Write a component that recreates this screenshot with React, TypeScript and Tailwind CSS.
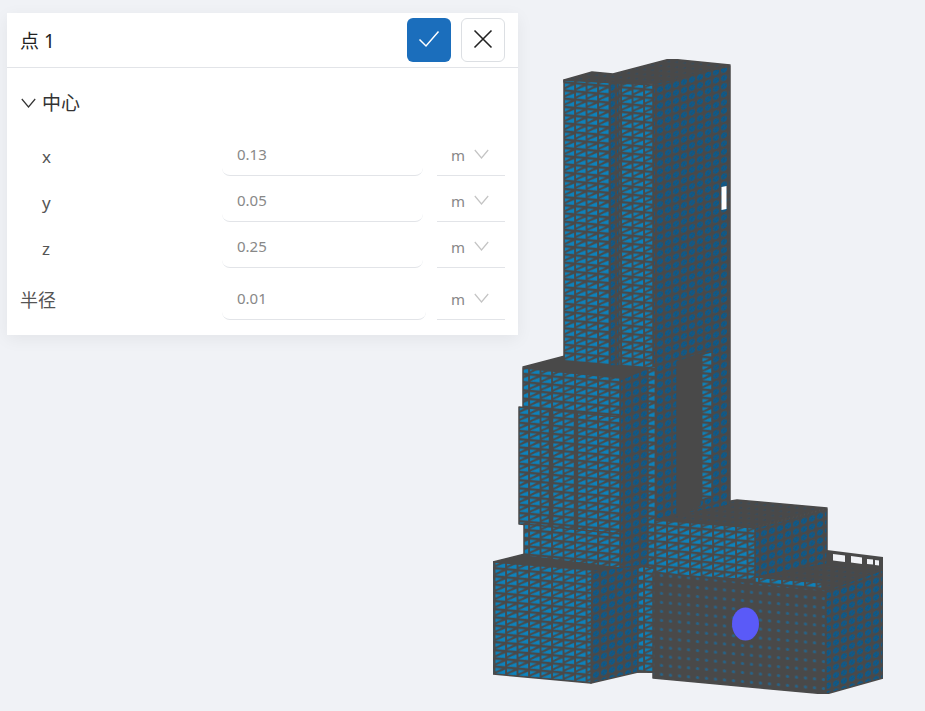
const rows = [
  { label: "x", value: "0.13" },
  { label: "y", value: "0.05" },
  { label: "z", value: "0.25" },
];

const faces = [
  // solid backing so no page colour leaks between faces
  { fill: "#4a4a4a", points: "620,360 656,360 656,672 620,672" },
  { fill: "#4a4a4a", points: "653,570 827,564 826,600 653,590" },
  // roofs
  { fill: "url(#roof)", points: "564,80 592,72 613,74 670,59 730,65 657,84 564,82" },
  { fill: "#4a4a4a", points: "523,367 565,356 650,364 620,380" },
  { fill: "#4a4a4a", points: "493,562 525,554 640,566 592,570" },
  { fill: "url(#roof)", points: "653,520 706,505 737,500 827,508 752,528" },
  { fill: "url(#roof)", points: "755,577 827,565 883,570 826,591" },
  // tower
  { fill: "url(#side)", points: "653,84 730,66 730,505 653,520" },
  { fill: "url(#front)", points: "564,80 653,85 653,368 564,362" },
  { fill: "url(#side)", points: "610,82 619,83 619,366 610,366" },
  { fill: "#4a4a4a", points: "677,362 700,354 700,505 677,515" },
  { fill: "url(#front)", points: "701,354 712,352 712,497 701,500" },
  { fill: "#ffffff", points: "721.5,187 726.5,186 726.5,209 721.5,210" },
  // mid blocks
  { fill: "url(#side)", points: "620,380 648,368 648,566 620,570" },
  { fill: "url(#front)", points: "648,368 656,366 656,672 648,672" },
  { fill: "url(#front)", points: "523,368 620,378 620,420 523,410" },
  { fill: "url(#front)", points: "519,407 620,417 620,534 519,524" },
  { fill: "#4a4a4a", points: "549.5,410 552.5,410 552.5,527 549.5,527" },
  { fill: "#4a4a4a", points: "574.5,412 577.5,412 577.5,530 574.5,530" },
  { fill: "url(#front)", points: "524,524 620,534 620,568 524,556" },
  // lower left block
  { fill: "url(#side)", points: "592,570 638,566 638,672 591,683" },
  { fill: "url(#front)", points: "638,566 654,568 654,672 638,672" },
  { fill: "url(#front)", points: "493,562 592,570 591,683 493,674" },
  // upper right block
  { fill: "url(#side)", points: "755,528 827,509 827,564 755,577" },
  { fill: "url(#front)", points: "655,520 755,528 755,580 655,574" },
  { fill: "url(#front)", points: "755,577 822,583 822,592 755,586" },
  // lower right block
  { fill: "url(#wall)", points: "653,572 755,583 826,590 826,694 653,678" },
  { fill: "url(#side)", points: "826,590 883,570 883,678 826,694" },
];

function Building() {
  return (
    <svg className="absolute inset-0" width="925" height="711" viewBox="0 0 925 711">
      <defs>
        <filter id="soft" x="0" y="0" width="100%" height="100%">
          <feGaussianBlur stdDeviation="0.4" />
        </filter>
        <pattern id="front" width="11.5" height="8.2" patternUnits="userSpaceOnUse" patternTransform="skewY(5)">
          <rect width="11.5" height="8.2" fill="#4a4a4a" />
          <path d="M1 7 L10.6 7 L10.6 2.2Z" fill="#0b82bc" />
          <path d="M1 1.3 L7.4 1.3 L1 5Z" fill="#0b82bc" />
        </pattern>
        <pattern id="side" width="8" height="8.2" patternUnits="userSpaceOnUse" patternTransform="skewY(-17)">
          <rect width="8" height="8.2" fill="#4a4a4a" />
          <circle cx="4" cy="4.1" r="3" fill="#0a5a8c" />
          <path d="M1.5 6.6 L6.5 1.6" stroke="#4a4a4a" strokeWidth="0.6" />
        </pattern>
        <pattern id="wall" width="9" height="9" patternUnits="userSpaceOnUse" patternTransform="skewY(5)">
          <rect width="9" height="9" fill="#4a4a4a" />
          <circle cx="4.5" cy="4.5" r="1.6" fill="#25648a" />
        </pattern>
        <pattern id="roof" width="8" height="5" patternUnits="userSpaceOnUse" patternTransform="skewY(5)">
          <rect width="8" height="5" fill="#4a4a4a" />
          <path d="M2 3.5 L6 3.5 L6 2Z" fill="#2f4d62" />
        </pattern>
      </defs>
      <g filter="url(#soft)">
        {/* railing */}
        <path d="M827 550 L883 557 V572 L827 566Z" fill="#4a4a4a" />
        <path d="M833 554 L845 555.5 V562 L833 560.5Z M851 556 L862 557.5 V564 L851 562.5Z M867 559 L873 559.5 V564.5 L867 564Z M875 560 L879 560.5 V565.5 L875 565Z" fill="#f0f2f6" />
        {faces.map((face, index) => (
          <polygon key={index} points={face.points} fill={face.fill} stroke={face.fill === "#ffffff" ? "none" : "#4a4a4a"} strokeWidth="1.5" strokeLinejoin="round" />
        ))}
        <ellipse cx="745.5" cy="624" rx="13.5" ry="16.5" fill="#5a5af8" />
      </g>
    </svg>
  );
}

function Chevron({ className }: { className: string }) {
  return (
    <svg className={className} width="15" height="10" viewBox="0 0 15 10" fill="none" stroke="currentColor" strokeWidth="1.2">
      <path d="M0.8 1 L7.5 9 L14.2 1" />
    </svg>
  );
}

function Row({ label, value, indent, wide, className }: { label: string; value: string; indent?: boolean; wide?: boolean; className?: string }) {
  return (
    <div className={`flex h-10 items-stretch ${className ?? ""}`}>
      <div className={`flex w-[215px] shrink-0 items-center text-[#555] ${indent ? "pt-[2px] pl-[35px] text-[17px]" : "pl-[13px] text-[18px]"}`}>
        {label}
      </div>
      <div className={`flex items-center rounded-b-lg border-b border-[#e2e4e8] pl-[15px] pb-[2px] text-[15px] text-[#888] ${wide ? "w-[204px]" : "w-[201px]"}`}>
        {value}
      </div>
      <div className={`flex w-[68px] items-center border-b border-[#e2e4e8] pl-[14px] text-[15px] text-[#888] ${wide ? "ml-[11px]" : "ml-[14px]"}`}>
        <span>m</span>
        <Chevron className="ml-[9px] mb-[3px] text-[#c4c4c4]" />
      </div>
    </div>
  );
}

export default function App() {
  return (
    <div className="relative h-[711px] w-[925px] overflow-hidden bg-[#f0f2f6] pt-[13px] pl-[7px] font-['Noto_Sans','Noto_Sans_CJK_SC',sans-serif]">
      <Building />
      <div className="relative w-[511px] bg-white shadow-[0_4px_16px_rgba(0,0,0,0.06)]">
        <div className="flex h-[55px] items-center border-b border-[#e2e4e8] pr-[13px] pl-[13px]">
          <span className="pt-[2px] text-[19px] text-[#222]">点 1</span>
          <button className="ml-auto flex h-11 w-11 items-center justify-center rounded-md bg-[#1b6ebc]">
            <svg className="mb-[3px]" width="22" height="18" viewBox="0 0 22 18" fill="none" stroke="#fff" strokeWidth="1.5">
              <path d="M1.5 9.5 L8 16 L20.5 1.5" />
            </svg>
          </button>
          <button className="ml-[10px] flex h-11 w-11 items-center justify-center rounded-md border border-[#dcdfe3] bg-white">
            <svg className="mb-[3px]" width="20" height="20" viewBox="0 0 20 20" fill="none" stroke="#222" strokeWidth="1.6">
              <path d="M1.5 1.5 L18.5 18.5 M18.5 1.5 L1.5 18.5" />
            </svg>
          </button>
        </div>
        <div className="pt-[21px] pb-[15px]">
          <div className="mb-[19px] flex h-7 items-center pl-[14px] text-[19px] text-[#333]">
            <Chevron className="mr-[6px] text-[#333]" />
            中心
          </div>
          <div className="flex flex-col gap-[6px]">
            {rows.map((row) => (
              <Row key={row.label} label={row.label} value={row.value} indent />
            ))}
            <Row label="半径" value="0.01" wide className="mt-[6px]" />
          </div>
        </div>
      </div>
    </div>
  );
}
